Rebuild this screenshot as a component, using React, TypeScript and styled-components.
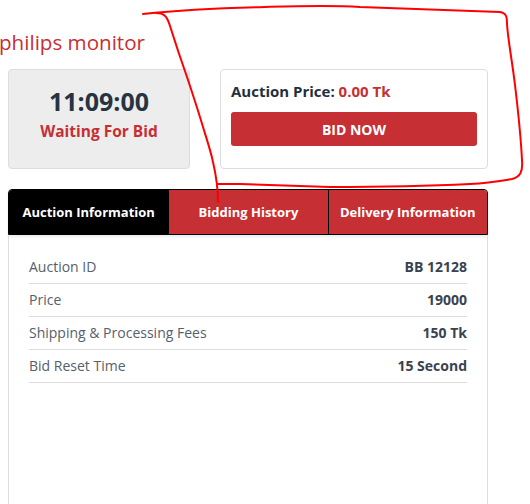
import React from "react";
import styled, { createGlobalStyle } from "styled-components";

const Global = createGlobalStyle`
  html, body { margin: 0; padding: 0; background: #fff; }
  body { font-family: "Open Sans", "Liberation Sans", sans-serif; }
  * { box-sizing: border-box; }
`;

const RED = "#c62f33";

const Page = styled.div`
  position: relative;
  width: 530px;
  height: 504px;
  overflow: hidden;
  padding-top: 30px;
`;

const Title = styled.h1`
  margin: 0 0 15px -1px;
  font-size: 20.6px;
  line-height: 24px;
  font-weight: 400;
  color: ${RED};
`;

const Content = styled.div`
  margin-left: 8px;
  width: 480px;
`;

const TopRow = styled.div`
  display: grid;
  grid-template-columns: 182px 268px;
  column-gap: 30px;
`;

const TimerBox = styled.div`
  display: flex;
  flex-direction: column;
  align-items: center;
  padding: 16px 10px;
  background: #ededed;
  border: 1px solid #dddddd;
  border-radius: 4px;
`;

const Clock = styled.div`
  font-size: 25px;
  line-height: 30px;
  font-weight: 700;
  color: #263442;
`;

const Status = styled.div`
  margin-top: 4px;
  font-size: 15.5px;
  line-height: 22px;
  font-weight: 700;
  color: ${RED};
`;

const PriceCard = styled.div`
  display: flex;
  flex-direction: column;
  padding: 10px 10px 22px;
  background: #fff;
  border: 1px solid #dddddd;
  border-radius: 4px;
`;

const PriceLine = styled.div`
  font-size: 15px;
  line-height: 22px;
  font-weight: 700;
  color: #1f2f3e;
`;

const PriceValue = styled.span`
  color: ${RED};
`;

const BidButton = styled.button`
  margin-top: 10px;
  height: 34px;
  border: none;
  border-radius: 3px;
  background: ${RED};
  color: #fff;
  font-family: inherit;
  font-size: 14px;
  font-weight: 700;
  cursor: pointer;
`;

const Tabs = styled.div`
  margin-top: 20px;
  display: grid;
  grid-template-columns: repeat(3, 1fr);
  height: 46px;
  border: 1px solid #000;
  border-radius: 4px 4px 0 0;
  overflow: hidden;
  box-shadow: 0 2px 3px rgba(0, 0, 0, 0.08);
`;

const Tab = styled.div<{ $active?: boolean; $first?: boolean }>`
  display: flex;
  align-items: center;
  justify-content: center;
  background: ${(p) => (p.$active ? "#000" : RED)};
  border-left: ${(p) => (p.$first ? "none" : "1px solid #000")};
  color: #fff;
  font-size: 13px;
  font-weight: 700;
`;

const Panel = styled.div`
  min-height: 300px;
  padding: 16px 20px;
  border: 1px solid #dddddd;
  border-top: none;
`;

const Row = styled.div`
  display: flex;
  justify-content: space-between;
  align-items: center;
  padding: 6px 0;
  border-bottom: 1px solid #dddddd;
  font-size: 14px;
  line-height: 20px;
`;

const Label = styled.span`
  color: #56606c;
`;

const Value = styled.span`
  font-weight: 700;
  color: #3a4250;
`;

const Scribble = styled.svg`
  position: absolute;
  top: 0;
  left: 0;
  pointer-events: none;
`;

const rows: [string, string][] = [
  ["Auction ID", "BB 12128"],
  ["Price", "19000"],
  ["Shipping & Processing Fees", "150 Tk"],
  ["Bid Reset Time", "15 Second"],
];

export default function App() {
  return (
    <Page>
      <Global />
      <Title>philips monitor</Title>
      <Content>
        <TopRow>
          <TimerBox>
            <Clock>11:09:00</Clock>
            <Status>Waiting For Bid</Status>
          </TimerBox>
          <PriceCard>
            <PriceLine>
              Auction Price: <PriceValue>0.00 Tk</PriceValue>
            </PriceLine>
            <BidButton>BID NOW</BidButton>
          </PriceCard>
        </TopRow>
        <Tabs>
          <Tab $active $first>Auction Information</Tab>
          <Tab>Bidding History</Tab>
          <Tab>Delivery Information</Tab>
        </Tabs>
        <Panel>
          {rows.map(([l, v]) => (
            <Row key={l}>
              <Label>{l}</Label>
              <Value>{v}</Value>
            </Row>
          ))}
        </Panel>
      </Content>
      <Scribble width="530" height="504" viewBox="0 0 530 504">
        <path
          d="M143,14 C180,10 220,8 265,7 C300,6 330,5 360,7 C420,9 470,11 500,12 C506,13 507,16 507,24 C508,40 512,60 515,85 C518,110 521,140 522,160 C523,172 520,177 512,179 C500,181 490,183 470,184 C430,186 380,187 330,187 C300,186 270,185 240,184 L218,184"
          fill="none"
          stroke="#ff0000"
          strokeWidth="2"
          strokeLinecap="round"
          strokeLinejoin="round"
        />
        <path
          d="M156,13 C164,13 167,16 170,26 C176,45 181,60 187,77 C193,95 198,110 203,127 C207,140 211,152 213,162 C216,175 218,188 218,202"
          fill="none"
          stroke="#ff0000"
          strokeWidth="2"
          strokeLinecap="round"
          strokeLinejoin="round"
        />
      </Scribble>
    </Page>
  );
}
